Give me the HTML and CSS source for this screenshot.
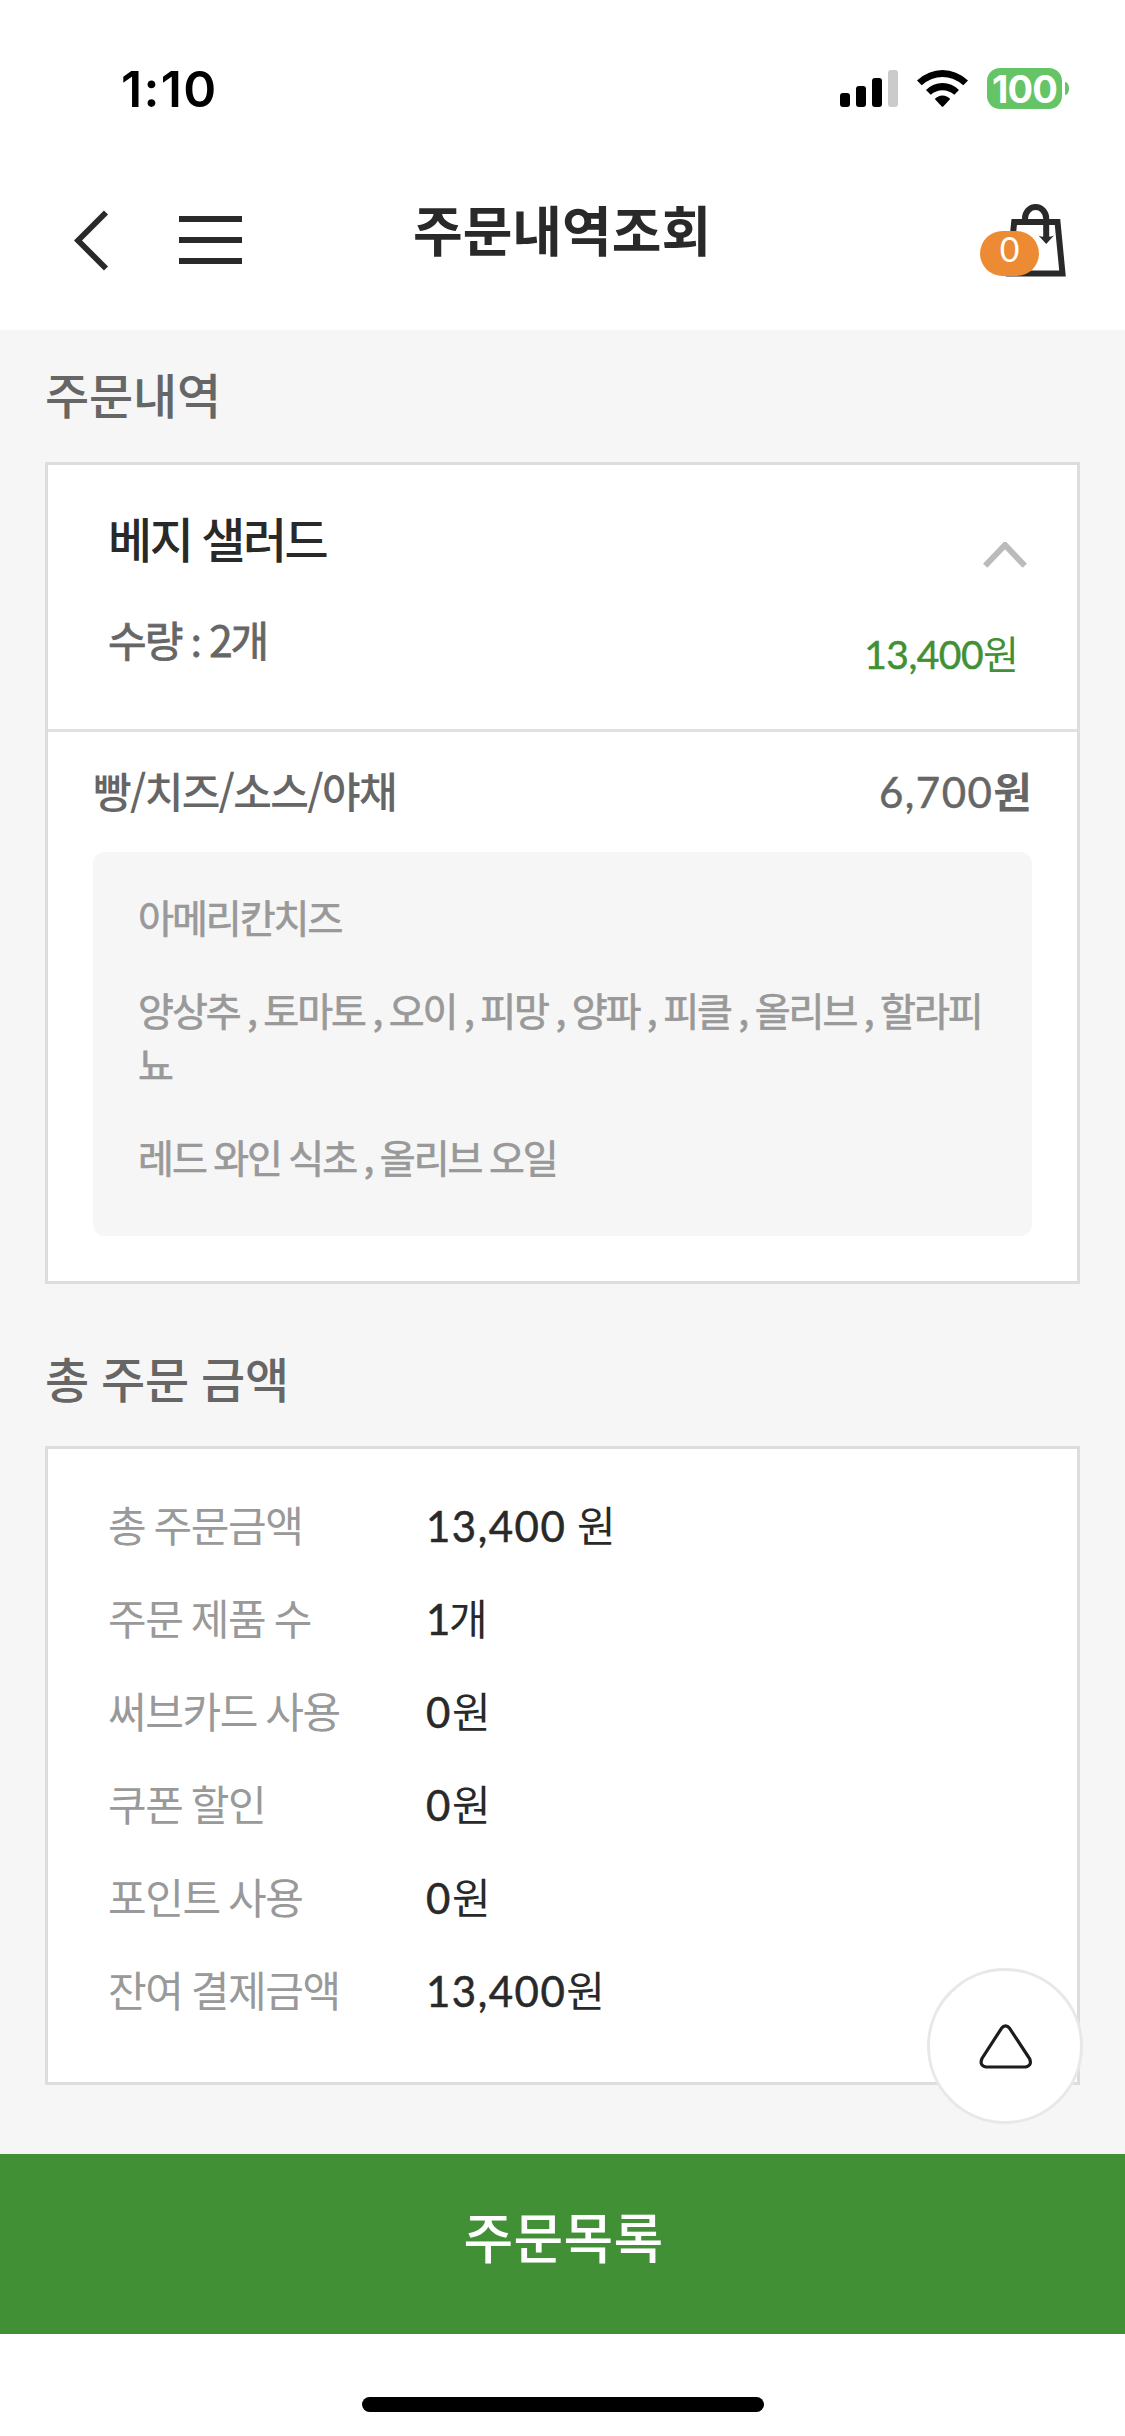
FILE: index.html
```html
<!DOCTYPE html>
<html lang="ko">
<head>
<meta charset="utf-8">
<title>주문내역조회</title>
<link rel="stylesheet" href="styles.css">
</head>
<body>
<div class="status">
  <span class="time">1:10</span>
  <div class="indicators">
    <svg class="signal" width="58" height="37" viewBox="0 0 58 37"><rect y="23" width="10" height="14" rx="3"/><rect x="16" y="16" width="10" height="21" rx="3"/><rect x="32" y="8" width="10" height="29" rx="3"/><rect x="48" width="10" height="37" rx="3" fill="#cbcbcb"/></svg>
    <svg class="wifi" width="51" height="37" viewBox="0 0 51 37"><path d="M0 10.5Q11.500 0 25.500 0T51 10.500L46.300 15.200Q36.500 7 25.500 7T4.700 15.200Z"/><path d="M9 20Q16 13 25.500 13T42 20L37.300 24.800Q32 20.200 25.500 20.200T13.700 24.800Z"/><path d="M17.800 29Q21 25.500 25.500 25.500T33.200 29L26.500 36.200Q25.500 37.300 24.500 36.200Z"/></svg>
    <div class="battery"><span class="level">100</span><i class="tip"></i></div>
  </div>
</div>
<header class="header">
  <svg class="back" width="36" height="62" viewBox="0 0 36 62"><path d="M32 2.500L4 30.500L32 58.500" fill="none" stroke="#292929" stroke-width="5.800"/></svg>
  <div class="menu"><i></i><i></i><i></i></div>
  <h1 class="title">주문내역조회</h1>
  <div class="cart">
    <svg width="86" height="76" viewBox="0 0 86 76"><g fill="none" stroke="#292929" stroke-width="6"><path d="M32.200 19H75.500L80.500 70.500H27Z"/><path d="M43 20V15.500A10.600 11.500 0 0 1 64.200 15.500V34"/></g><path d="M56.500 32.500Q60 34.500 64.200 33.500Q68 34.500 72 32.500L64.200 41Z" fill="#292929"/></svg>
    <span class="badge">0</span>
  </div>
</header>
<main class="content">
  <h2 class="section">주문내역</h2>
  <section class="card order">
    <div class="summary">
      <div class="item">
        <h3 class="name">베지 샐러드</h3>
        <p class="qty">수량 <span class="colon">:</span> 2개</p>
      </div>
      <div class="side">
        <svg width="44" height="26" viewBox="0 0 44 26"><path d="M2.200 23.800L22 3L41.800 23.800" fill="none" stroke="#bbb" stroke-width="6"/></svg>
        <p class="price"><span class="num">13,400</span>원</p>
      </div>
    </div>
    <div class="detail">
      <div class="detail-head"><span class="kinds">빵/치즈/소스/야채</span><span class="unit"><span class="num">6,700</span><b>원</b></span></div>
      <div class="options">
        <p>아메리칸치즈</p>
        <p>양상추 , 토마토 , 오이 , 피망 , 양파 , 피클 , 올리브 , 할라피뇨</p>
        <p>레드 와인 식초 , 올리브 오일</p>
      </div>
    </div>
  </section>
  <h2 class="section second">총 주문 금액</h2>
  <dl class="card totals">
    <dt>총 주문금액</dt><dd><span class="num">13,400</span> 원</dd>
    <dt>주문 제품 수</dt><dd><span class="num one">1</span>개</dd>
    <dt>써브카드 사용</dt><dd><span class="num">0</span>원</dd>
    <dt>쿠폰 할인</dt><dd><span class="num">0</span>원</dd>
    <dt>포인트 사용</dt><dd><span class="num">0</span>원</dd>
    <dt>잔여 결제금액</dt><dd><span class="num">13,400</span>원</dd>
  </dl>
</main>
<button class="list-button">주문목록</button>
<footer class="home"><i></i></footer>
<div class="to-top"><svg width="54" height="46" viewBox="0 0 54 46"><path d="M22.300 4.600Q26.500 -0.800 30.800 4.600L50.500 34.500Q53.500 41.500 46.500 43H7Q0 41.500 3 34.500Z" fill="#fff" stroke="#1b1d1d" stroke-width="3.200"/></svg></div>
</body>
</html>
```
FILE: styles.css
```css
* { box-sizing: border-box; margin: 0; padding: 0; }
body {
  width: 1125px;
  height: 2436px;
  display: flex;
  flex-direction: column;
  background: #fff;
  color: #292929;
  font-family: "Noto Sans CJK KR", sans-serif;
  overflow: hidden;
}
svg { display: block; flex: none; }
.num { font-family: Lato, sans-serif; letter-spacing: 1.500px; -webkit-text-stroke: 0.5px currentColor; }
.num.one { letter-spacing: -1.500px; }

.status { height: 150px; flex: none; padding: 0 56px 0 121px; display: flex; justify-content: space-between; color: #000; }
.time { font: 600 50px/60px Inter, sans-serif; margin-top: 59px; letter-spacing: 1.300px; }
.indicators { display: flex; align-items: flex-start; padding-top: 68px; }
.signal { margin: 2px 19px 0 0; }
.wifi { margin: 2px 19px 0 0; }
.battery { display: flex; align-items: center; gap: 3px; height: 41px; }
.level { width: 75px; height: 41px; border-radius: 13px; background: #65c466; color: #fff; text-align: center; font: 700 38px/42px Inter, sans-serif; letter-spacing: -0.800px; }
.tip { width: 4px; height: 13px; background: #65c466; border-radius: 0 4px 4px 0 / 0 6px 6px 0; }

.header { height: 180px; flex: none; display: flex; align-items: flex-start; padding: 0 57px 0 74px; }
.back { margin-top: 60px; }
.menu { width: 63px; margin: 66px 0 0 69px; display: flex; flex-direction: column; gap: 15px; }
.menu i { height: 6px; background: #292929; }
.title { font-size: 54px; line-height: 80px; font-weight: 700; margin: 39px auto 0 171px; white-space: nowrap; }
.cart { position: relative; margin-top: 53px; }
.badge { position: absolute; left: -2px; top: 28px; width: 59px; height: 45px; border-radius: 23px; background: #ec8b34; color: #fff; text-align: center; font: 400 34px/36px Lato, sans-serif; }

.content { height: 1824px; flex: none; background: #f6f6f6; padding: 0 45px; }
.section { height: 132px; font-size: 48px; line-height: 126px; font-weight: 500; color: #666; word-spacing: -1.200px; letter-spacing: -0.2px; }
.second { height: 162px; line-height: 187px; }
.card { background: #fff; border: 3px solid #ddd; }
.order { height: 822px; }
.summary { height: 267px; border-bottom: 3px solid #e1e1e1; display: flex; justify-content: space-between; padding: 0 50px 0 60px; }
.name { font-size: 48px; line-height: 70px; font-weight: 500; letter-spacing: -2.500px; word-spacing: -1px; margin-top: 37px; }
.qty { font-size: 42px; line-height: 62px; font-weight: 400; color: #666; letter-spacing: -2px; margin-top: 36px; -webkit-text-stroke: 0.8px #666; }
.colon { font-family: Lato, sans-serif; }
.side { display: flex; flex-direction: column; align-items: flex-end; padding-top: 77px; }
.price { color: #419035; font-size: 39px; line-height: 58px; letter-spacing: -1px; margin: 55px 9px 0 0; }
.price .num { letter-spacing: -0.5px; }
.detail { padding: 0 45px; }
.detail-head { height: 120px; display: flex; justify-content: space-between; color: #666; font-size: 42px; line-height: 116px; }
.kinds { font-weight: 500; letter-spacing: -1.700px; }
.options { height: 384px; border-radius: 12px; background: #f6f6f6; padding: 37px 45px; display: flex; flex-direction: column; gap: 39px; color: #999; font-size: 39px; line-height: 54px; letter-spacing: -2px; word-spacing: -1.500px; word-break: break-all; -webkit-text-stroke: 0.7px #999; }
.totals { height: 639px; padding: 29px 0 0 60px; display: grid; grid-template-columns: 318px 1fr; grid-auto-rows: 93px; align-content: start; font-size: 42px; line-height: 91px; }
.totals dt { color: #999; font-weight: 400; letter-spacing: -1.400px; word-spacing: -2px; }
.totals dd { letter-spacing: -1px; }

.list-button { height: 180px; flex: none; border: 0; background: #419035; color: #fff; font: 500 54px/80px "Noto Sans CJK KR", sans-serif; letter-spacing: 0.3px; padding: 0 0 16px 2px; }
.home { flex: 1; display: flex; justify-content: center; padding-top: 63px; }
.home i { width: 402px; height: 15px; border-radius: 8px; background: #000; }
.to-top { position: absolute; left: 927px; top: 1968px; width: 156px; height: 156px; border: 3px solid #e8e8e8; border-radius: 50%; background: #fff; display: flex; justify-content: center; padding: 53px 0 0 2px; }
```
